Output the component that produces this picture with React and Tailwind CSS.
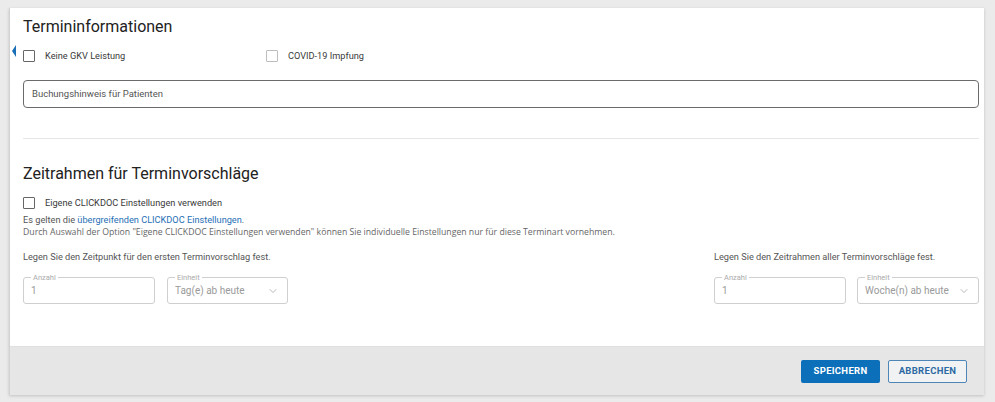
import { ChevronDown } from 'lucide-react'

function Check({ label, faint = false }) {
  return (
    <label className="flex items-center gap-[10px]">
      <span className={`w-[12px] h-[12px] border rounded-[1px] bg-white ${faint ? 'border-[#bdbdbd]' : 'border-[#666]'}`} />
      <span className="text-[9.2px] text-[#3a3a3a]">{label}</span>
    </label>
  )
}

function OutlinedField({ label, value, select = false, width }) {
  return (
    <fieldset className={`${width} h-[30px] border border-[#cfcfcf] rounded-[3px] pl-[7px] pr-[8px] -mt-[5px] flex items-center`}>
      <legend className="text-[7.5px] text-[#aaa] px-[2px] leading-none">{label}</legend>
      <span className="flex-1 text-[10px] text-[#9a9a9a] -mt-[3px]">{value}</span>
      {select && <ChevronDown size={12} strokeWidth={1.4} className="text-[#999] -mt-[3px]" />}
    </fieldset>
  )
}

export default function App() {
  return (
    <div className="w-[995px] h-[402px] bg-[#ebebeb] pt-[8px] pl-[9px] pr-[11px] pb-[7px] font-['Roboto',sans-serif]">
      <div className="relative h-full bg-white border-l border-[#d2d2d2] shadow-[0_1px_3px_rgba(0,0,0,0.18)] flex flex-col">
        {/* Side marker */}
        <div className="absolute left-[2px] top-[37px] w-0 h-0 border-y-[6px] border-y-transparent border-r-[4px] border-r-[#1b6fb4]" />

        <div className="flex-1 pl-[13px] pr-[5px] pt-[7px]">
          <h2 className="text-[16px] text-[#222] leading-[24px]">Termininformationen</h2>

          <div className="flex items-center mt-[11px] h-[12px]">
            <div className="w-[243px]"><Check label="Keine GKV Leistung" /></div>
            <Check label="COVID-19 Impfung" faint />
          </div>

          <div className="mt-[18px] h-[28px] border border-[#6b6b6b] rounded-[4px] flex items-center px-[8px]">
            <span className="text-[9.5px] text-[#555]">Buchungshinweis für Patienten</span>
          </div>

          <div className="mt-[30px] h-px bg-[#e6e6e6]" />

          <h2 className="mt-[24px] text-[16px] text-[#222] leading-[22px]">Zeitrahmen für Terminvorschläge</h2>

          <div className="mt-[12px] h-[12px] flex items-center"><Check label="Eigene CLICKDOC Einstellungen verwenden" /></div>

          <p className="mt-[5px] text-[9.2px] text-[#555] leading-[12px]">
            Es gelten die <span className="text-[#1f6fb5]">übergreifenden CLICKDOC Einstellungen</span>.
          </p>
          <p className="font-['Open_Sans',sans-serif] text-[8.7px] text-[#666] leading-[13px]">
            Durch Auswahl der Option "Eigene CLICKDOC Einstellungen verwenden" können Sie individuelle Einstellungen nur für diese Terminart vornehmen.
          </p>

          <div className="mt-[12px] flex justify-between">
            <div>
              <p className="text-[9.2px] text-[#555] leading-[12px]">Legen Sie den Zeitpunkt für den ersten Terminvorschlag fest.</p>
              <div className="mt-[16px] flex gap-[12px]">
                <OutlinedField label="Anzahl" value="1" width="w-[132px]" />
                <OutlinedField label="Einheit" value="Tag(e) ab heute" select width="w-[121px]" />
              </div>
            </div>
            <div className="w-[265px]">
              <p className="text-[9.2px] text-[#555] leading-[12px]">Legen Sie den Zeitrahmen aller Terminvorschläge fest.</p>
              <div className="mt-[16px] flex gap-[11px]">
                <OutlinedField label="Anzahl" value="1" width="w-[132px]" />
                <OutlinedField label="Einheit" value="Woche(n) ab heute" select width="w-[122px]" />
              </div>
            </div>
          </div>
        </div>

        {/* Footer */}
        <div className="h-[49px] bg-[#e6e6e6] border-t border-[#e0e0e0] flex items-center justify-end gap-[8px] pr-[17px]">
          <button className="w-[79px] h-[23px] bg-[#0b6fba] rounded-[2px] text-white text-[9.5px] font-bold tracking-[0.3px]">SPEICHERN</button>
          <button className="w-[79px] h-[23px] bg-[#f0f2f4] border border-[#4f86b8] rounded-[2px] text-[#2d6aa3] text-[9.5px] font-bold tracking-[0.3px]">ABBRECHEN</button>
        </div>
      </div>
    </div>
  )
}
